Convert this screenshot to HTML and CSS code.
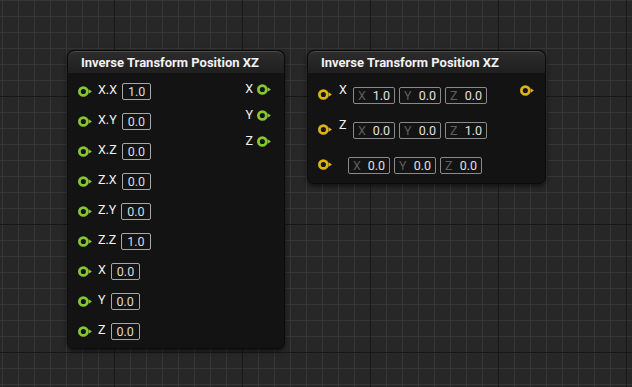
FILE: index.html
```html
<!DOCTYPE html>
<html lang="en">
  <head>
    <meta charset="UTF-8" />
    <meta name="viewport" content="width=device-width, initial-scale=1.0" />
    <title>Inverse Transform Position XZ</title>
    <link rel="stylesheet" href="styles.css">
  </head>
  <body>
    <div class="graph">
      <!-- matrix inputs version -->
      <div class="node node-matrix">
        <div class="node-title">Inverse Transform Position XZ</div>
        <div class="node-body">
          <div class="inputs">
            <div class="row"><svg class="pin pin-float" viewBox="0 0 14 10"><circle cx="5" cy="5" r="3.7"/><path d="M10 2.8 L13 5 L10 7.2 Z"/></svg><span class="label">X.X</span><span class="box">1.0</span></div>
            <div class="row"><svg class="pin pin-float" viewBox="0 0 14 10"><circle cx="5" cy="5" r="3.7"/><path d="M10 2.8 L13 5 L10 7.2 Z"/></svg><span class="label">X.Y</span><span class="box">0.0</span></div>
            <div class="row"><svg class="pin pin-float" viewBox="0 0 14 10"><circle cx="5" cy="5" r="3.7"/><path d="M10 2.8 L13 5 L10 7.2 Z"/></svg><span class="label">X.Z</span><span class="box">0.0</span></div>
            <div class="row"><svg class="pin pin-float" viewBox="0 0 14 10"><circle cx="5" cy="5" r="3.7"/><path d="M10 2.8 L13 5 L10 7.2 Z"/></svg><span class="label">Z.X</span><span class="box">0.0</span></div>
            <div class="row"><svg class="pin pin-float" viewBox="0 0 14 10"><circle cx="5" cy="5" r="3.7"/><path d="M10 2.8 L13 5 L10 7.2 Z"/></svg><span class="label">Z.Y</span><span class="box">0.0</span></div>
            <div class="row"><svg class="pin pin-float" viewBox="0 0 14 10"><circle cx="5" cy="5" r="3.7"/><path d="M10 2.8 L13 5 L10 7.2 Z"/></svg><span class="label">Z.Z</span><span class="box">1.0</span></div>
            <div class="row"><svg class="pin pin-float" viewBox="0 0 14 10"><circle cx="5" cy="5" r="3.7"/><path d="M10 2.8 L13 5 L10 7.2 Z"/></svg><span class="label">X</span><span class="box">0.0</span></div>
            <div class="row"><svg class="pin pin-float" viewBox="0 0 14 10"><circle cx="5" cy="5" r="3.7"/><path d="M10 2.8 L13 5 L10 7.2 Z"/></svg><span class="label">Y</span><span class="box">0.0</span></div>
            <div class="row"><svg class="pin pin-float" viewBox="0 0 14 10"><circle cx="5" cy="5" r="3.7"/><path d="M10 2.8 L13 5 L10 7.2 Z"/></svg><span class="label">Z</span><span class="box">0.0</span></div>
          </div>
          <div class="outputs">
            <div class="out-row"><span class="label">X</span><svg class="pin pin-float" viewBox="0 0 14 10"><circle cx="5" cy="5" r="3.7"/><path d="M10 2.8 L13 5 L10 7.2 Z"/></svg></div>
            <div class="out-row"><span class="label">Y</span><svg class="pin pin-float" viewBox="0 0 14 10"><circle cx="5" cy="5" r="3.7"/><path d="M10 2.8 L13 5 L10 7.2 Z"/></svg></div>
            <div class="out-row"><span class="label">Z</span><svg class="pin pin-float" viewBox="0 0 14 10"><circle cx="5" cy="5" r="3.7"/><path d="M10 2.8 L13 5 L10 7.2 Z"/></svg></div>
          </div>
        </div>
      </div>

      <!-- vector inputs version -->
      <div class="node node-vector">
        <div class="node-title">Inverse Transform Position XZ</div>
        <div class="node-body">
          <div class="inputs">
            <div class="vrow">
              <svg class="pin pin-vector" viewBox="0 0 14 10"><circle cx="5" cy="5" r="3.7"/><path d="M10 2.8 L13 5 L10 7.2 Z"/></svg>
              <span class="label">X</span>
              <div class="vec">
                <span class="vbox"><i>X</i>1.0</span><span class="vbox"><i>Y</i>0.0</span><span class="vbox"><i>Z</i>0.0</span>
              </div>
            </div>
            <div class="vrow">
              <svg class="pin pin-vector" viewBox="0 0 14 10"><circle cx="5" cy="5" r="3.7"/><path d="M10 2.8 L13 5 L10 7.2 Z"/></svg>
              <span class="label">Z</span>
              <div class="vec">
                <span class="vbox"><i>X</i>0.0</span><span class="vbox"><i>Y</i>0.0</span><span class="vbox"><i>Z</i>1.0</span>
              </div>
            </div>
            <div class="vrow">
              <svg class="pin pin-vector" viewBox="0 0 14 10"><circle cx="5" cy="5" r="3.7"/><path d="M10 2.8 L13 5 L10 7.2 Z"/></svg>
              <span class="label empty"></span>
              <div class="vec">
                <span class="vbox"><i>X</i>0.0</span><span class="vbox"><i>Y</i>0.0</span><span class="vbox"><i>Z</i>0.0</span>
              </div>
            </div>
          </div>
          <div class="outputs">
            <div class="out-row out-vector"><svg class="pin pin-vector" viewBox="0 0 14 10"><circle cx="5" cy="5" r="3.7"/><path d="M10 2.8 L13 5 L10 7.2 Z"/></svg></div>
          </div>
        </div>
      </div>
    </div>
  </body>
</html>
```
FILE: styles.css
```css
body {
  margin: 0;
  font-family: Roboto, "Liberation Sans", sans-serif;
  color: #e8e8e8;
}
.graph {
  position: relative;
  width: 632px;
  height: 387px;
  overflow: hidden;
  background:
    linear-gradient(to right, #171717 1px, transparent 1px) 114px 0 / 128px 128px,
    linear-gradient(to bottom, #171717 1px, transparent 1px) 0 96px / 128px 128px,
    linear-gradient(to right, #363636 1px, transparent 1px) 2px 0 / 16px 16px,
    linear-gradient(to bottom, #363636 1px, transparent 1px) 0 0 / 16px 16px,
    #272727;
}
.node {
  position: absolute;
  box-sizing: border-box;
  background: #131313;
  border: 1px solid #0b0b0b;
  border-radius: 7px;
  box-shadow: 0 2px 5px rgba(0, 0, 0, 0.6);
  overflow: hidden;
}
.node-matrix {
  left: 67px;
  top: 50px;
  width: 218px;
  height: 299px;
}
.node-vector {
  left: 307px;
  top: 50px;
  width: 239px;
  height: 134px;
}
.node-title {
  height: 21px;
  padding-left: 13px;
  line-height: 21px;
  font-size: 13px;
  font-weight: bold;
  color: #f2f2f2;
  background: linear-gradient(to bottom, #2c2c2c, #1f1f1f);
  border-top: 1px solid #4a4a4a;
  border-radius: 7px 7px 0 0;
}
.node-body {
  display: flex;
  justify-content: space-between;
}
.node-matrix .node-body {
  padding: 3px 12px 0 10px;
}
.node-vector .node-body {
  padding: 4px 10px 0 10px;
}
.pin {
  width: 15px;
  height: 11px;
  flex: none;
}
.pin circle {
  fill: none;
  stroke-width: 2.6;
}
.pin-float circle {
  stroke: #86c631;
}
.pin-float path {
  fill: #86c631;
}
.pin-vector circle {
  stroke: #dbb317;
}
.pin-vector path {
  fill: #dbb317;
}
.row {
  display: flex;
  align-items: center;
  height: 30px;
}
.label {
  font-size: 12.5px;
  color: #f0f0f0;
  margin-top: -3px;
}
.row .label {
  margin-left: 5px;
  margin-right: 5px;
}
.box {
  box-sizing: border-box;
  height: 17px;
  padding: 0 5px;
  border: 1px solid #a8a8a8;
  border-radius: 2px;
  font-size: 12.5px;
  line-height: 15px;
  color: #dcdcdc;
  margin-top: 1px;
}
.out-row {
  display: flex;
  align-items: center;
  justify-content: flex-end;
  height: 26px;
}
.out-row .label {
  margin-right: 4px;
  margin-top: -1px;
}
.vrow {
  display: flex;
  align-items: center;
  height: 35px;
}
.vrow .label {
  width: 9px;
  margin-left: 6px;
  margin-right: 5px;
  margin-top: -10px;
}
.vrow .label.empty {
  width: 0;
  margin-right: 9px;
}
.vec {
  display: flex;
  gap: 4px;
  margin-top: 1px;
}
.vbox {
  box-sizing: border-box;
  display: flex;
  justify-content: space-between;
  width: 42px;
  height: 17px;
  padding: 0 4px 0 4px;
  border: 1px solid #8a8a8a;
  border-radius: 2px;
  font-size: 12.5px;
  line-height: 15px;
  color: #e0e0e0;
}
.vbox i {
  font-style: normal;
  color: #5e5e5e;
}
.out-vector {
  height: 26px;
}
```
